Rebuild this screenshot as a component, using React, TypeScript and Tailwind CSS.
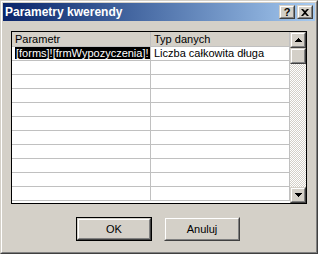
import React from 'react';

const ROWS = 11;

const UpArrow = () => (
  <svg width="7" height="4" viewBox="0 0 7 4">
    <path d="M3 0h1v1h1v1h1v1h1v1H0V3h1V2h1V1h1z" fill="#000" />
  </svg>
);

const DownArrow = () => (
  <svg width="7" height="4" viewBox="0 0 7 4">
    <path d="M0 0h7v1H6v1H5v1H4v1H3V3H2V2H1V1H0z" fill="#000" />
  </svg>
);

const Raised: React.FC<{ className?: string; children?: React.ReactNode }> = ({ className = '', children }) => (
  <div className={`border border-t-[#d4d0c8] border-l-[#d4d0c8] border-b-[#404040] border-r-[#404040] bg-[#d4d0c8] ${className}`}>
    <div className="flex h-full w-full items-center justify-center border border-t-white border-l-white border-b-[#808080] border-r-[#808080]">
      {children}
    </div>
  </div>
);

export default function App() {
  return (
    <div
      className="w-[318px] h-[254px] border border-t-[#d4d0c8] border-l-[#d4d0c8] border-b-[#404040] border-r-[#404040] bg-[#d4d0c8] text-[11px] text-black"
      style={{ fontFamily: '"Liberation Sans", Arial, sans-serif' }}
    >
      <div className="flex h-full flex-col border border-t-white border-l-white border-b-[#808080] border-r-[#808080] p-px">
        {/* title bar */}
        <div className="flex h-[18px] items-center bg-gradient-to-r from-[#0a246a] to-[#a6caf0] pl-[2px] pr-[2px]">
          <span className="flex-1 text-[12px] font-bold leading-none text-white">Parametry kwerendy</span>
          <Raised className="h-[14px] w-[16px]">
            <span className="text-[11px] font-bold leading-none">?</span>
          </Raised>
          <Raised className="ml-[2px] h-[14px] w-[16px]">
            <svg width="8" height="7" viewBox="0 0 8 7">
              <path d="M0 0h2l2 2 2-2h2L5 3.5 8 7H6L4 5 2 7H0l3-3.5z" fill="#000" />
            </svg>
          </Raised>
        </div>

        {/* grid */}
        <div className="ml-[8px] mt-[10px] flex h-[173px] w-[296px] border border-black bg-white">
          <div className="flex flex-1 flex-col">
            <div className="flex h-[15px] border-b border-[#c0c0c0] bg-[#d4d0c8]">
              <div className="w-[139px] border-r border-[#c0c0c0] pl-[3px] leading-[14px]">Parametr</div>
              <div className="flex-1 border-r border-[#c0c0c0] pl-[3px] leading-[14px]">Typ danych</div>
            </div>
            {Array.from({ length: ROWS }).map((_, i) => (
              <div key={i} className="flex h-[14px] border-b border-[#c0c0c0]">
                <div className="w-[139px] overflow-hidden whitespace-nowrap border-r border-[#c0c0c0] pl-[3px] leading-[13px]">
                  {i === 0 && <span className="bg-black px-px text-white">[forms]![frmWypozyczenia]!</span>}
                </div>
                <div className="flex-1 overflow-hidden whitespace-nowrap border-r border-[#c0c0c0] pl-[3px] leading-[13px]">
                  {i === 0 && 'Liczba całkowita długa'}
                </div>
              </div>
            ))}
          </div>

          {/* scrollbar */}
          <div className="flex w-[16px] flex-col">
            <Raised className="h-[16px] w-[16px]">
              <UpArrow />
            </Raised>
            <Raised className="h-[16px] w-[16px]" />
            <div className="flex-1 bg-[repeating-conic-gradient(#d4d0c8_0_25%,#ffffff_0_50%)] bg-[length:2px_2px]" />
            <Raised className="h-[16px] w-[16px]">
              <DownArrow />
            </Raised>
          </div>
        </div>

        {/* buttons */}
        <div className="mt-[13px] flex justify-center gap-[12px] pr-[2px]">
          <div className="h-[24px] w-[76px] border border-black">
            <Raised className="h-full w-full">
              <span>OK</span>
            </Raised>
          </div>
          <Raised className="h-[24px] w-[76px]">
            <span>Anuluj</span>
          </Raised>
        </div>
      </div>
    </div>
  );
}
